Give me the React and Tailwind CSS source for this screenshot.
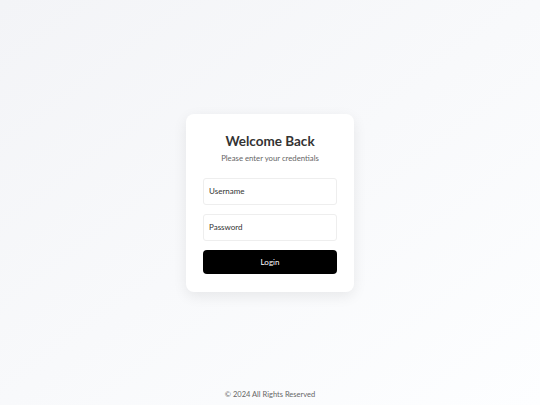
export default function App() {
  return (
    <div
      className="w-[540px] h-[405px] grid grid-rows-[1fr_auto_1fr] bg-gradient-to-br from-[#f3f4f7] to-[#fdfeff] text-[#333333]"
      style={{ fontFamily: "Lato, 'Noto Sans', sans-serif" }}
    >
      <div />
      <div className="flex justify-center">
        <div className="w-[168px] bg-white rounded-[8px] shadow-[0_4px_14px_rgba(0,0,0,0.08)] px-[17px] pt-[18px] pb-[18px] flex flex-col">
          <h1 className="text-[13.5px] leading-[18px] font-bold text-center text-[#333333]">Welcome Back</h1>
          <p className="mt-[3px] text-[7.75px] leading-[10px] text-center text-[#666666]">Please enter your credentials</p>
          <div className="mt-[15px] flex flex-col gap-[9px]">
            <div className="h-[27px] border border-[#eeeeee] rounded-[3px] flex items-center px-[5px] text-[8px] text-[#333333]">Username</div>
            <div className="h-[27px] border border-[#eeeeee] rounded-[3px] flex items-center px-[5px] text-[8px] text-[#333333]">Password</div>
            <div className="h-[24px] bg-black rounded-[4px] flex items-center justify-center text-[8px] text-white">Login</div>
          </div>
        </div>
      </div>
      <div className="flex flex-col justify-end items-center pb-[5px]">
        <span className="text-[7.5px] text-[#666666]">© 2024 All Rights Reserved</span>
      </div>
    </div>
  );
}
